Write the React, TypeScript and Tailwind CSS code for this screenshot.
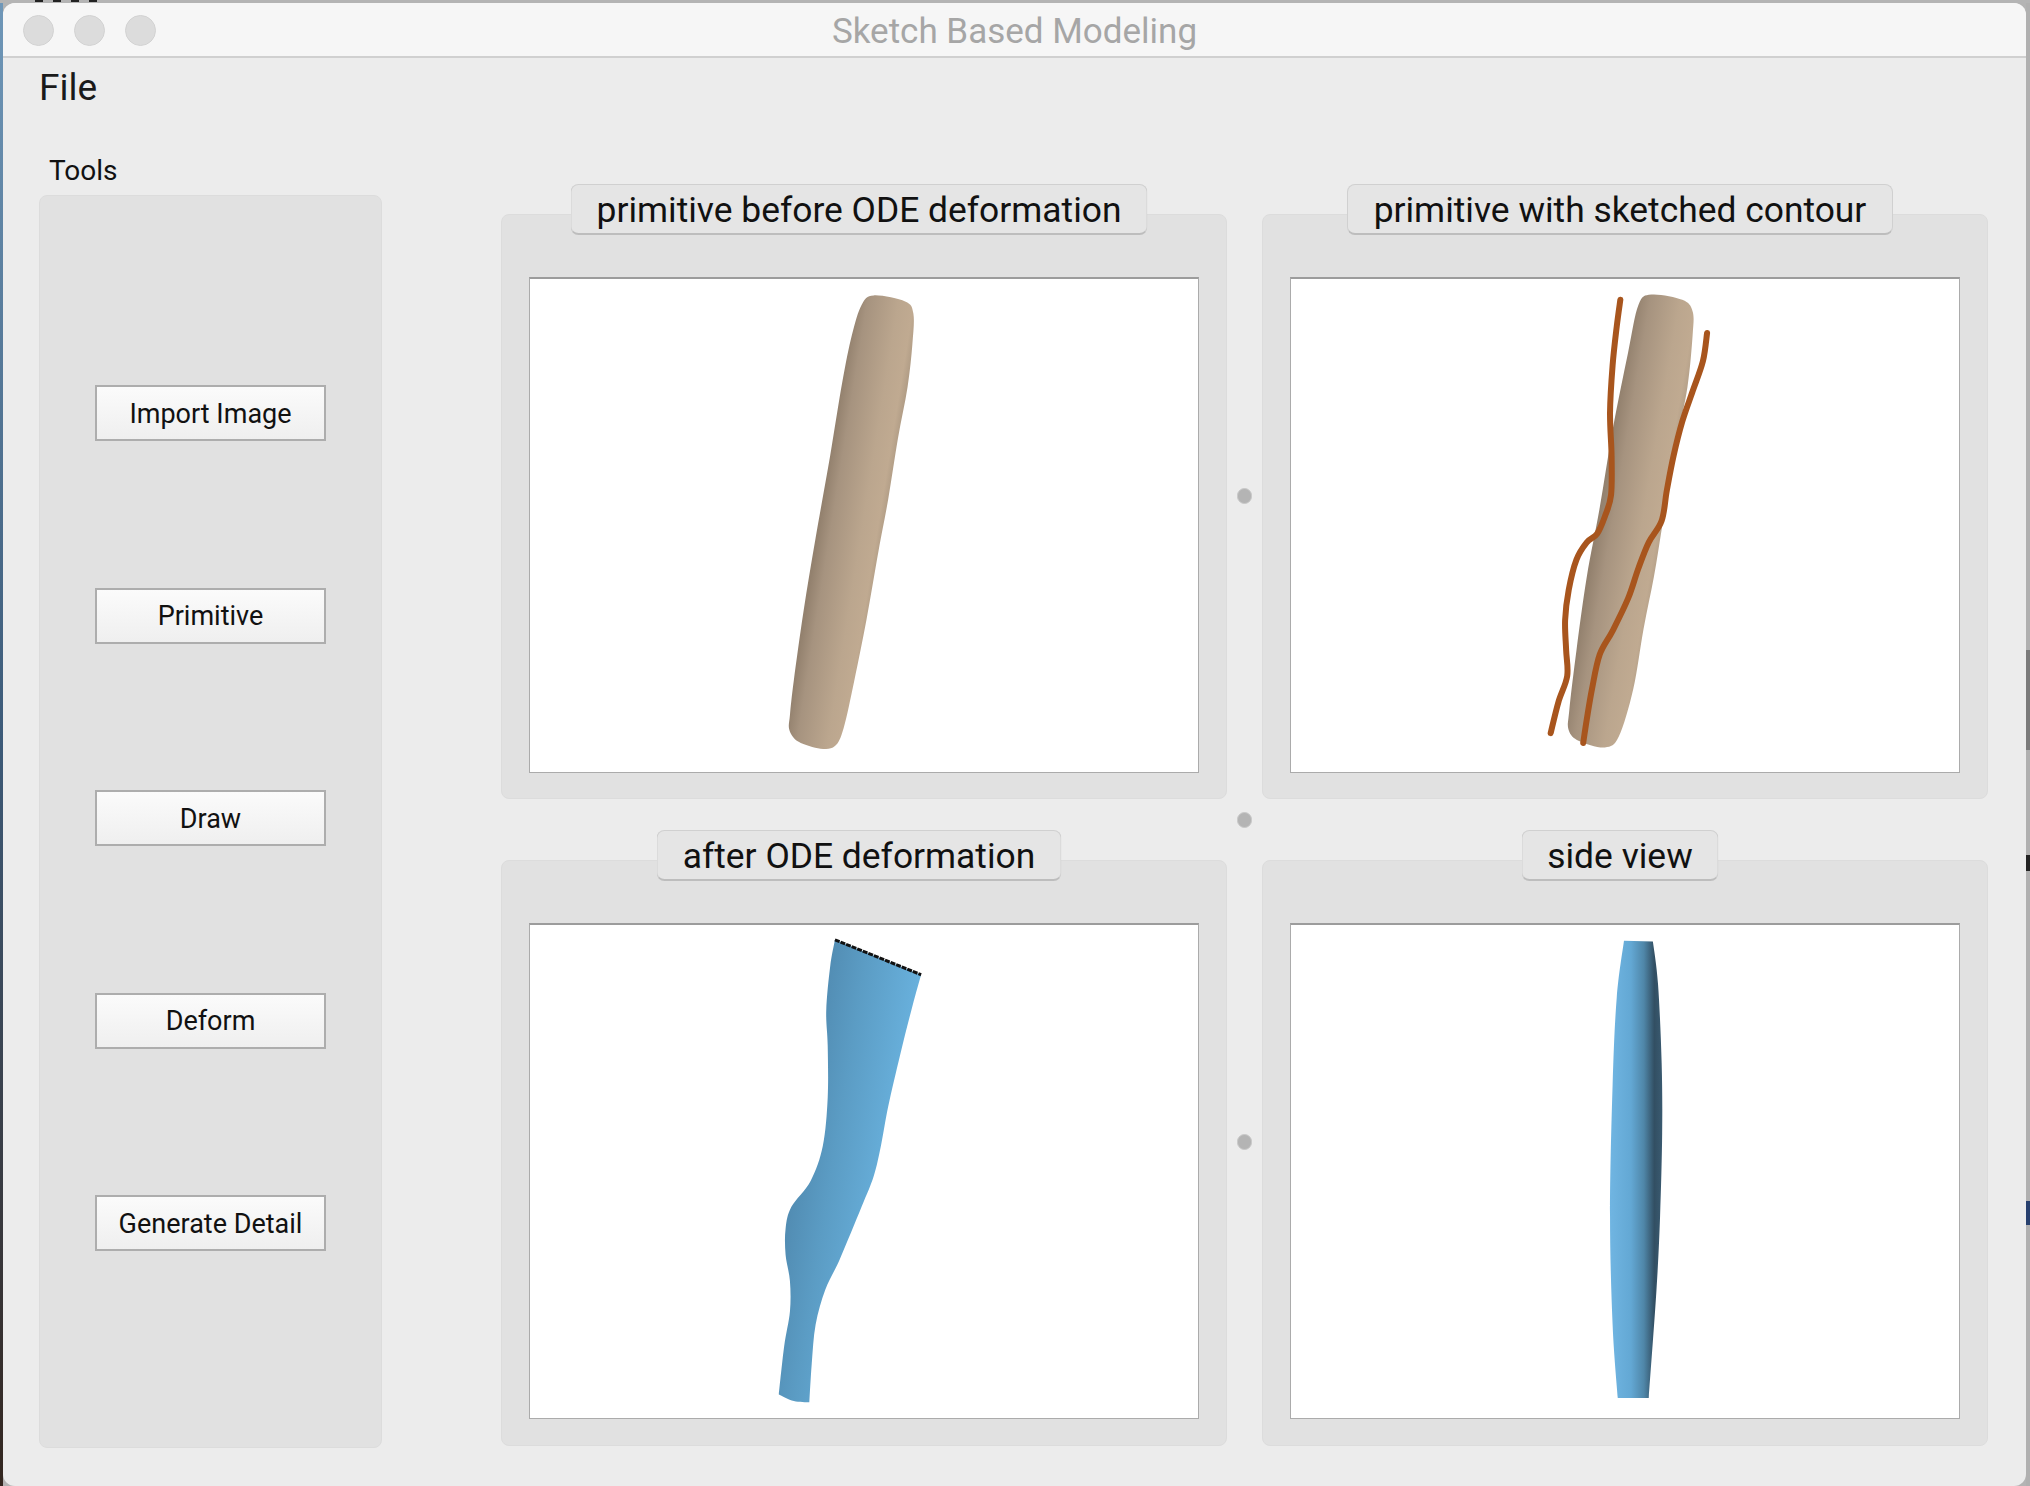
import type { ReactNode } from "react";

const F = "font-['Roboto','Liberation_Sans',sans-serif]";

type Pt = number[];

// Catmull-Rom run through the points, as cubic segments
function run(pts: Pt[], closed = false): string {
  const n = pts.length;
  const at = (i: number) => (closed ? pts[(i + n) % n] : pts[Math.max(0, Math.min(n - 1, i))]);
  let d = "";
  const last = closed ? n : n - 1;
  for (let i = 0; i < last; i++) {
    const [p0, p1, p2, p3] = [at(i - 1), at(i), at(i + 1), at(i + 2)];
    const c1x = p1[0] + (p2[0] - p0[0]) / 6;
    const c1y = p1[1] + (p2[1] - p0[1]) / 6;
    const c2x = p2[0] - (p3[0] - p1[0]) / 6;
    const c2y = p2[1] - (p3[1] - p1[1]) / 6;
    d += ` C${c1x} ${c1y} ${c2x} ${c2y} ${p2[0]} ${p2[1]}`;
  }
  return d;
}
const closedPath = (pts: Pt[]) => `M${pts[0][0]} ${pts[0][1]}${run(pts, true)} Z`;
const openPath = (pts: Pt[]) => `M${pts[0][0]} ${pts[0][1]}${run(pts)}`;

function Tab({ label, w }: { label: string; w: string }) {
  return (
    <div className={`absolute top-[-31px] left-[calc(50%-5px)] -translate-x-1/2 h-[51px] ${w} flex items-center justify-center rounded-[8px] bg-[#e5e5e5] border border-[#d0d0d0] border-b-2 border-b-[#bdbdbd] pt-[3px] text-[35.4px] text-[#111] whitespace-nowrap`}>
      {label}
    </div>
  );
}

function Group({ label, w, children }: { label: string; w: string; children: ReactNode }) {
  return (
    <div className="relative h-full rounded-[8px] bg-[#e1e1e1] border border-[#dcdcdc] px-[27px] pt-[62px]">
      <Tab label={label} w={w} />
      <div className="h-[496px] bg-white border border-[#ababab] border-t-2 border-t-[#9c9c9c]">{children}</div>
    </div>
  );
}

function Btn({ label }: { label: string }) {
  return (
    <button className="w-[231px] h-[56px] border-2 border-[#adadad] bg-gradient-to-b from-[#fbfbfb] to-[#efefef] pt-[2px] text-[27px] text-[#111]">
      {label}
    </button>
  );
}

const Dot = () => <div className="w-[15px] h-[16px] rounded-full bg-[#b4b4b4] border border-[#c8c8c8]" />;

const p1: Pt[] = [[745,330],[770,308],[835,322],[852,350],[850,420],[840,520],[820,640],[800,780],[780,900],[755,1060],[730,1200],[708,1310],[690,1352],[660,1358],[615,1342],[596,1315],[597,1280],[605,1200],[625,1040],[650,870],[680,680],[705,510],[725,400]];
const p2: Pt[] = [[810,330],[835,306],[895,318],[915,345],[915,400],[905,520],[885,640],[870,740],[855,850],[840,960],[820,1080],[800,1220],[772,1330],[745,1355],[695,1340],[675,1315],[676,1270],[690,1130],[710,960],[735,800],[760,620],[790,440]];
const c1: Pt[] = [[775,318],[768,380],[760,470],[755,580],[758,680],[757,770],[745,820],[730,860],[710,880],[690,920],[675,990],[668,1060],[670,1130],[672,1190],[655,1250],[640,1322]];
const c2: Pt[] = [[943,395],[935,460],[915,530],[895,600],[878,680],[865,760],[855,830],[830,880],[810,940],[790,1010],[760,1085],[735,1140],[720,1220],[710,1290],[703,1345]];

function Primitive1() {
  return (
    <svg className="block w-full h-full" viewBox="60 270 1380 1142" preserveAspectRatio="none">
      <defs>
        <linearGradient id="p1" gradientUnits="userSpaceOnUse" x1="600" y1="820" x2="810" y2="850">
          <stop offset="0.28" stopColor="#93816e" />
          <stop offset="0.4" stopColor="#a6937f" />
          <stop offset="0.7" stopColor="#bba68e" />
          <stop offset="0.85" stopColor="#c0aa91" />
          <stop offset="0.92" stopColor="#b09c85" />
        </linearGradient>
      </defs>
      <path fill="url(#p1)" d={closedPath(p1)} />
    </svg>
  );
}

function Primitive2() {
  return (
    <svg className="block w-full h-full" viewBox="137 270 1294 1142" preserveAspectRatio="none">
      <defs>
        <linearGradient id="p2" gradientUnits="userSpaceOnUse" x1="680" y1="820" x2="890" y2="850">
          <stop offset="0.25" stopColor="#93816e" />
          <stop offset="0.38" stopColor="#a6937f" />
          <stop offset="0.65" stopColor="#bba68e" />
          <stop offset="0.8" stopColor="#c0aa91" />
          <stop offset="0.88" stopColor="#b09c85" />
        </linearGradient>
      </defs>
      <path fill="url(#p2)" d={closedPath(p2)} />
      <path fill="none" stroke="#a8551d" strokeWidth="6" strokeLinecap="round" strokeLinejoin="round" vectorEffect="non-scaling-stroke" d={openPath(c1)} />
      <path fill="none" stroke="#a8551d" strokeWidth="6" strokeLinecap="round" strokeLinejoin="round" vectorEffect="non-scaling-stroke" d={openPath(c2)} />
    </svg>
  );
}

const aRight: Pt[] = [[868,398],[850,470],[825,580],[800,700],[785,790],[770,860],[745,930],[700,1050],[670,1120],[650,1200],[642,1290],[637,1378]];
const aBottom: Pt[] = [[637,1378],[605,1375],[574,1360]];
const aLeft: Pt[] = [[574,1360],[585,1250],[597,1170],[597,1100],[588,1040],[588,980],[600,930],[640,870],[665,790],[675,680],[675,560],[672,480],[680,380],[690,318]];

function After() {
  return (
    <svg className="block w-full h-full" viewBox="60 284 1380 1130" preserveAspectRatio="none">
      <defs>
        <linearGradient id="a1" gradientUnits="userSpaceOnUse" x1="590" y1="820" x2="800" y2="850">
          <stop offset="0" stopColor="#4f88ae" />
          <stop offset="0.45" stopColor="#5b9cc4" />
          <stop offset="1" stopColor="#68b0dc" />
        </linearGradient>
      </defs>
      <path fill="url(#a1)" d={`M690 318 L868 398${run(aRight)}${run(aBottom)}${run(aLeft)} Z`} />
      <path d="M690 318 L868 398" stroke="#111" strokeWidth="3" strokeDasharray="5 1" fill="none" vectorEffect="non-scaling-stroke" />
    </svg>
  );
}

const sRight: Pt[] = [[838,322],[848,420],[855,600],[856,760],[852,950],[845,1120],[830,1368]];
const sLeft: Pt[] = [[770,1368],[760,1200],[755,950],[760,650],[768,450],[782,320]];

function Side() {
  return (
    <svg className="block w-full h-full" viewBox="137 284 1294 1130" preserveAspectRatio="none">
      <defs>
        <linearGradient id="s1" gradientUnits="userSpaceOnUse" x1="755" y1="0" x2="856" y2="0">
          <stop offset="0" stopColor="#70b5e2" />
          <stop offset="0.4" stopColor="#63a8d4" />
          <stop offset="0.65" stopColor="#4f86a8" />
          <stop offset="0.85" stopColor="#324f63" />
          <stop offset="1" stopColor="#3a5a70" />
        </linearGradient>
      </defs>
      <path fill="url(#s1)" d={`M782 320 L838 322${run(sRight)} L770 1368${run(sLeft)} Z`} />
    </svg>
  );
}

export default function App() {
  return (
    <div className={`w-[2030px] h-[1486px] overflow-hidden flex flex-col bg-[#b4b4b4] ${F}`}>
      {/* what shows of the desktop above the window */}
      <div className="h-[3px] shrink-0 flex pl-[35px] gap-[10px]">
        <span className="w-[8px] h-[2px] bg-[#222]" />
        <span className="w-[8px] h-[2px] bg-[#222]" />
        <span className="w-[8px] h-[2px] bg-[#222]" />
        <span className="w-[8px] h-[2px] bg-[#222]" />
      </div>
      <div className="flex-1 min-h-0 flex">
        <div className="w-[3px] shrink-0 bg-gradient-to-b from-[#6f97b8] via-[#3c5a78] to-[#33261f]" />
        <div className="flex-1 min-w-0 bg-[#ececec] rounded-[12px] flex flex-col overflow-hidden">
          <header className="relative shrink-0 h-[55px] bg-[#f6f6f6] border-b-2 border-[#d0d0d0] flex items-center justify-center pt-[5px]">
            <div className="absolute left-[20px] top-[12px] flex gap-[20px]">
              <span className="w-[31px] h-[31px] rounded-full bg-[#dcdcdc] border border-[#d2d2d2]" />
              <span className="w-[31px] h-[31px] rounded-full bg-[#dcdcdc] border border-[#d2d2d2]" />
              <span className="w-[31px] h-[31px] rounded-full bg-[#dcdcdc] border border-[#d2d2d2]" />
            </div>
            <span className="text-[35px] text-[#a6a6a6]">Sketch Based Modeling</span>
          </header>
          <div className="shrink-0 h-[60px] pl-[36px] flex items-center text-[37px] text-[#1a1a1a]">File</div>
          <div className="flex-1 min-h-0 flex pl-[36px] pb-[38px]">
            <aside className="w-[343px] shrink-0 flex flex-col">
              <div className="h-[77px] pl-[10px] pt-[37px] text-[28px] leading-[32px] text-[#111]">Tools</div>
              <div className="flex-1 rounded-[8px] bg-[#e1e1e1] border border-[#dcdcdc] flex flex-col items-center justify-between pt-[189px] pb-[196px]">
                <Btn label="Import Image" />
                <Btn label="Primitive" />
                <Btn label="Draw" />
                <Btn label="Deform" />
                <Btn label="Generate Detail" />
              </div>
            </aside>
            <div className="ml-[119px] flex-1 pt-[96px] grid grid-cols-[726px_35px_726px] grid-rows-[585px_61px_586px]">
              <Group label="primitive before ODE deformation" w="w-[577px]"><Primitive1 /></Group>
              <div className="flex items-center justify-center pb-[22px]"><Dot /></div>
              <Group label="primitive with sketched contour" w="w-[546px]"><Primitive2 /></Group>
              <div />
              <div className="flex items-center justify-center pb-[20px]"><Dot /></div>
              <div />
              <Group label="after ODE deformation" w="w-[405px]"><After /></Group>
              <div className="flex items-center justify-center pb-[22px]"><Dot /></div>
              <Group label="side view" w="w-[197px]"><Side /></Group>
            </div>
          </div>
        </div>
        {/* the desktop to the right of the window */}
        <div className="w-[4px] shrink-0 flex flex-col bg-[#b0b0b0]">
          <div className="h-[647px] shrink-0" />
          <div className="h-[100px] shrink-0 bg-[#7a7a7a]" />
          <div className="h-[105px] shrink-0" />
          <div className="h-[16px] shrink-0 bg-[#222]" />
          <div className="h-[330px] shrink-0" />
          <div className="h-[24px] shrink-0 bg-[#27406e]" />
        </div>
      </div>
    </div>
  );
}
